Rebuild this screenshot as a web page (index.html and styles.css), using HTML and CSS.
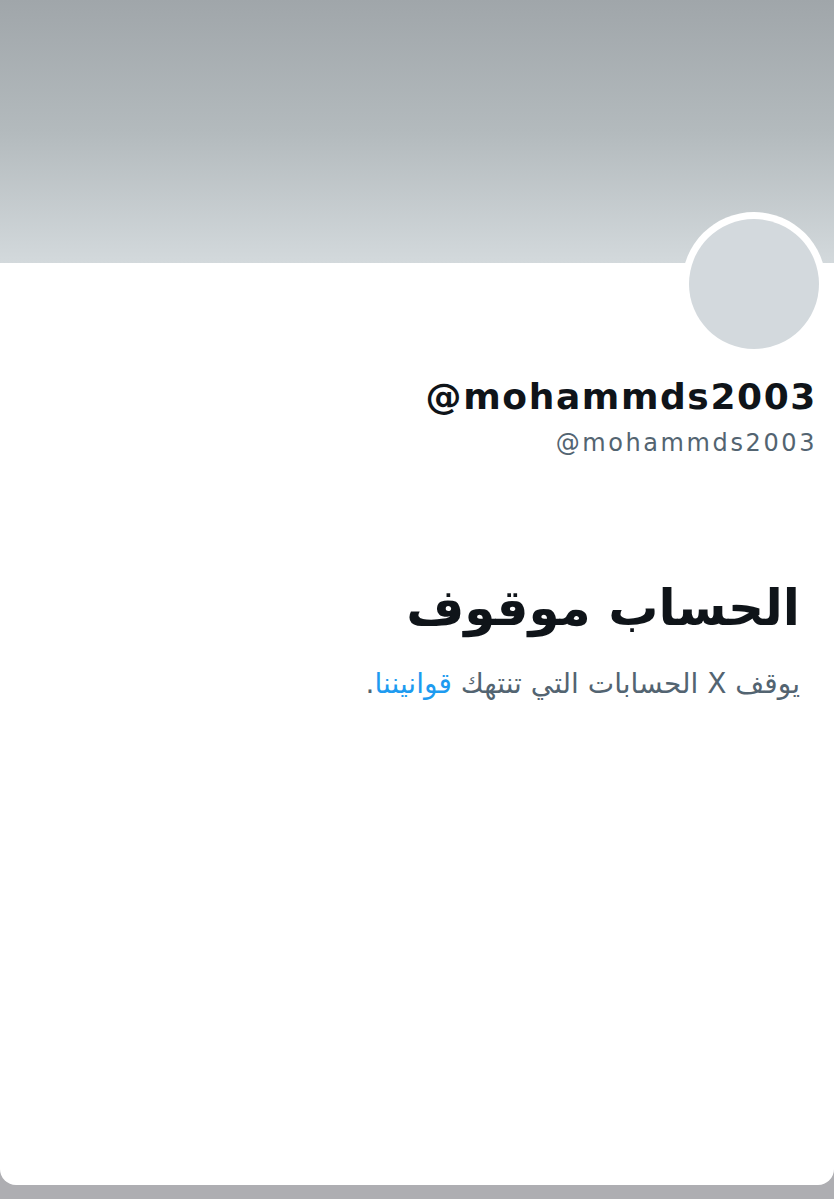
FILE: index.html
```html
<!DOCTYPE html>
<html lang="ar">
<head>
<meta charset="utf-8">
<link rel="stylesheet" href="styles.css">
</head>
<body>
<div class="page">
  <div class="banner"></div>
  <div class="avatar-row">
    <div class="avatar-ring"><div class="avatar"></div></div>
  </div>
  <div class="names">
    <div class="display-name" dir="ltr">@mohammds2003</div>
    <div class="handle" dir="ltr">@mohammds2003</div>
  </div>
  <div class="notice" dir="rtl">
    <h1 class="notice-title">الحساب موقوف</h1>
    <p class="notice-text">يوقف X الحسابات التي تنتهك <a class="notice-link" href="#">قوانيننا</a>.</p>
  </div>
</div>
</body>
</html>
```

FILE: styles.css
```css
html {
  background: #aeaeb2;
}
body {
  margin: 0;
  background: #aeaeb2;
  font-family: "DejaVu Sans", "Noto Sans", sans-serif;
}
.page {
  height: 1185px;
  background: #ffffff;
  border-radius: 0 0 16px 16px;
  overflow: hidden;
}
.banner {
  height: 263px;
  background: linear-gradient(to bottom, #a0a6aa 0%, #b3babd 50%, #d3d9dc 100%);
}
.avatar-row {
  display: flex;
  justify-content: flex-end;
  padding-right: 8px;
  margin-top: -51px;
}
.avatar-ring {
  width: 144px;
  height: 144px;
  border-radius: 50%;
  background: #ffffff;
  padding: 7px;
  box-sizing: border-box;
}
.avatar {
  width: 130px;
  height: 130px;
  border-radius: 50%;
  background: #d3d9dd;
}
.names {
  display: flex;
  flex-direction: column;
  align-items: flex-end;
  padding-right: 17px;
  margin-top: 19px;
}
.display-name {
  font-size: 36px;
  font-weight: bold;
  letter-spacing: 1.6px;
  color: #0f1419;
  line-height: 44px;
}
.handle {
  font-size: 24px;
  color: #536471;
  letter-spacing: 2.6px;
  line-height: 30px;
  margin-top: 9px;
}
.notice {
  padding-right: 34px;
  margin-top: 118px;
}
.notice-title {
  margin: 0;
  font-size: 50px;
  font-weight: bold;
  color: #0f1419;
  line-height: 64px;
}
.notice-text {
  margin: 25px 0 0;
  font-size: 28px;
  color: #536471;
  line-height: 38px;
}
.notice-link {
  color: #1d9bf0;
  text-decoration: none;
}
```
